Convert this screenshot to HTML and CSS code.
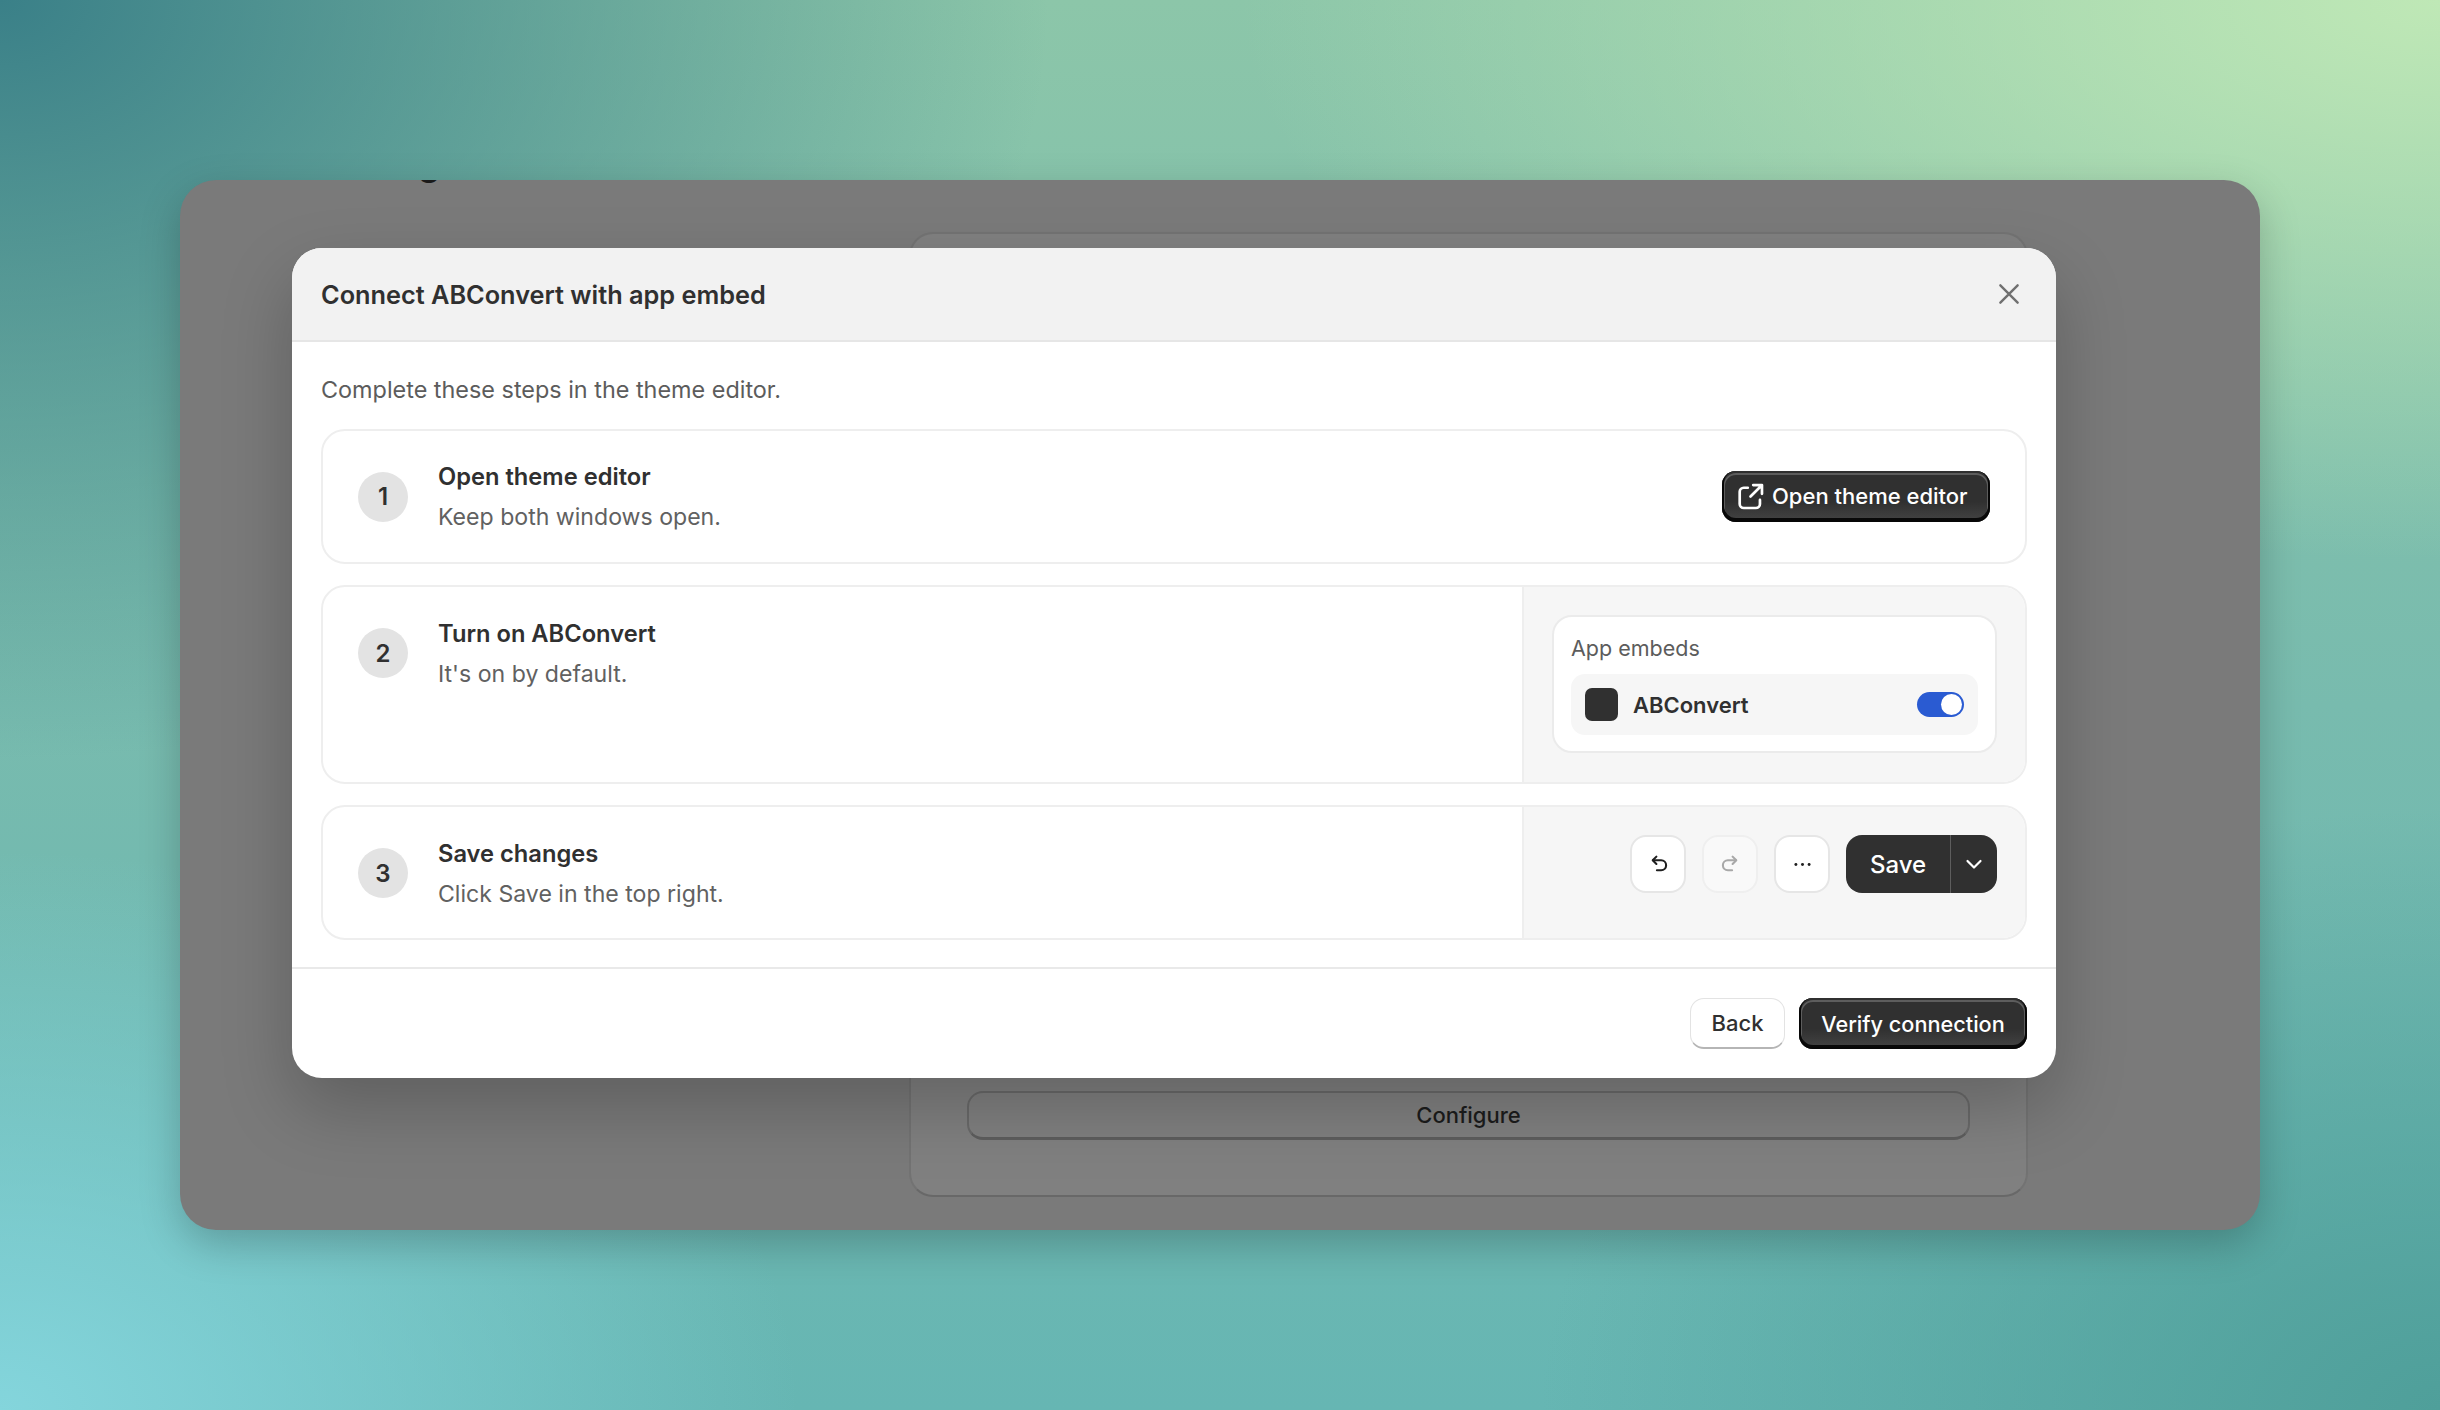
FILE: index.html
```html
<!DOCTYPE html>
<html lang="en">
<head>
    <meta charset="UTF-8">
    <title>Connect ABConvert with app embed</title>
    <link rel="stylesheet" href="styles.css">
</head>
<body>

<div class="window">
    <span class="cut-title">g</span>

    <div class="back-card">
        <div class="back-button">Configure</div>
    </div>

    <div class="modal">
        <div class="modal-header">
            <h2>Connect ABConvert with app embed</h2>
            <svg class="close" viewBox="0 0 20 20" fill="none" stroke="#707070" stroke-width="2" stroke-linecap="round">
                <path d="M2.8 2.8l14.4 14.4M17.2 2.8L2.8 17.2"/>
            </svg>
        </div>

        <div class="modal-body">
            <p class="intro">Complete these steps in the theme editor.</p>

            <div class="step step-one">
                <div class="step-main">
                    <span class="num">1</span>
                    <div class="step-text">
                        <h3>Open theme editor</h3>
                        <p>Keep both windows open.</p>
                    </div>
                </div>
                <a class="btn-dark btn-editor">
                    <svg viewBox="0 0 20 20" fill="none" stroke="#fff" stroke-width="2" stroke-linecap="round" stroke-linejoin="round">
                        <path d="M8 3.500H5a3 3 0 0 0-3 3v9a3 3 0 0 0 3 3h9a3 3 0 0 0 3-3v-3"/>
                        <path d="M12 1.500h6.500V8M18.200 1.800L10 10"/>
                    </svg>
                    Open theme editor
                </a>
            </div>

            <div class="step step-two">
                <div class="step-main">
                    <span class="num">2</span>
                    <div class="step-text">
                        <h3>Turn on ABConvert</h3>
                        <p>It's on by default.</p>
                    </div>
                </div>
                <div class="step-side">
                    <div class="embeds">
                        <div class="embeds-label">App embeds</div>
                        <div class="embed-row">
                            <span class="app-icon"></span>
                            <span class="app-name">ABConvert</span>
                            <span class="toggle"><i></i></span>
                        </div>
                    </div>
                </div>
            </div>

            <div class="step step-three">
                <div class="step-main">
                    <span class="num">3</span>
                    <div class="step-text">
                        <h3>Save changes</h3>
                        <p>Click Save in the top right.</p>
                    </div>
                </div>
                <div class="step-side toolbar">
                    <span class="tool">
                        <svg viewBox="0 0 20 20" fill="none" stroke="#1f1f1f" stroke-width="2" stroke-linecap="round" stroke-linejoin="round">
                            <path d="M8 2.500L4.500 6 8 9.500"/>
                            <path d="M5 6h7.500a4.700 4.700 0 0 1 0 9.500H8.500"/>
                        </svg>
                    </span>
                    <span class="tool tool-off">
                        <svg viewBox="0 0 20 20" fill="none" stroke="#a8a8a8" stroke-width="2" stroke-linecap="round" stroke-linejoin="round">
                            <path d="M12 2.500L15.500 6 12 9.500"/>
                            <path d="M15 6H7.500a4.700 4.700 0 0 0 0 9.500h4"/>
                        </svg>
                    </span>
                    <span class="tool">
                        <svg viewBox="0 0 20 20" fill="#1f1f1f">
                            <circle cx="3.700" cy="10" r="1.400"/>
                            <circle cx="10" cy="10" r="1.400"/>
                            <circle cx="16.300" cy="10" r="1.400"/>
                        </svg>
                    </span>
                    <div class="save-group">
                        <span class="save">Save</span>
                        <span class="save-arrow">
                            <svg viewBox="0 0 20 20" fill="none" stroke="#fff" stroke-width="2.200" stroke-linecap="round" stroke-linejoin="round">
                                <path d="M3.500 7l6.500 6.500L16.500 7"/>
                            </svg>
                        </span>
                    </div>
                </div>
            </div>
        </div>

        <div class="modal-footer">
            <a class="btn-light">Back</a>
            <a class="btn-dark btn-verify">Verify connection</a>
        </div>
    </div>
</div>

</body>
</html>
```

FILE: styles.css
```css
* {
    margin: 0;
    padding: 0;
    box-sizing: border-box;
    font-family: 'Inter', 'Liberation Sans', sans-serif;
}

body {
    width: 2440px;
    height: 1410px;
    overflow: hidden;
    padding: 180px;
    background:
        radial-gradient(ellipse 800px 560px at 0% 100%, #84d5dc 0%, rgba(132, 213, 220, 0) 100%),
        radial-gradient(ellipse 1050px 760px at 0% 0%, #3a8088 0%, rgba(58, 128, 136, 0) 100%),
        radial-gradient(ellipse 1200px 560px at 100% 0%, #bfe8b6 0%, rgba(191, 232, 182, 0) 100%),
        radial-gradient(ellipse 900px 600px at 100% 100%, #4f9f9a 0%, rgba(79, 159, 154, 0) 100%),
        linear-gradient(180deg, #8cc6a9 0%, #78bbae 50%, #66b6b3 100%);
}

/* Dimmed app window behind the modal */
.window {
    position: relative;
    height: 1050px;
    border-radius: 36px;
    background: #7a7a7a;
    box-shadow: 0 14px 40px rgba(0, 0, 0, 0.22);
    overflow: hidden;
    display: flex;
    justify-content: flex-end;
    padding: 52px 232px 33px 0;
}

.cut-title {
    position: absolute;
    left: 238px;
    top: -36px;
    font-size: 36px;
    line-height: 36px;
    font-weight: 600;
    color: #1a1a1a;
}

.back-card {
    width: 1119px;
    background: #808080;
    border: 2px solid #737373;
    border-bottom-color: #686868;
    border-radius: 24px;
    padding: 857px 56px 0;
}

.back-button {
    height: 49px;
    border: 2px solid #6a6a6a;
    border-bottom: 3px solid #5e5e5e;
    border-radius: 16px;
    color: #1c1c1c;
    font-size: 22px;
    font-weight: 500;
    display: flex;
    align-items: center;
    justify-content: center;
}

.modal {
    position: absolute;
    left: 112px;
    top: 68px;
    width: 1764px;
    height: 830px;
    background: #fff;
    border-radius: 30px;
    overflow: hidden;
    box-shadow: 0 30px 70px rgba(0, 0, 0, 0.22);
}

.modal-header {
    height: 94px;
    background: #f2f2f2;
    border-bottom: 2px solid #e6e6e6;
    display: flex;
    align-items: center;
    justify-content: space-between;
    padding: 0 35px 0 29px;
}

.modal-header h2 {
    font-size: 25.3px;
    font-weight: 600;
    color: #303030;
}

.close {
    width: 24px;
    height: 24px;
}

.modal-body {
    padding: 0 29px;
    height: 627px;
    border-bottom: 2px solid #e9e9e9;
}

.intro {
    height: 87px;
    padding-top: 33px;
    font-size: 23.4px;
    color: #5c5c5c;
}

.step {
    display: flex;
    border: 2px solid #eeeeee;
    border-radius: 24px;
    overflow: hidden;
    margin-bottom: 21px;
}

.step-one {
    height: 135px;
    align-items: center;
    justify-content: space-between;
    padding-right: 35px;
}

.step-two {
    height: 199px;
}

.step-three {
    height: 135px;
}

.step-main {
    flex: 1;
    display: flex;
    align-items: flex-start;
    padding: 29px 0 0 35px;
}

.step-one .step-main {
    padding-top: 0;
}

.num {
    width: 50px;
    height: 50px;
    margin-top: 12px;
    border-radius: 50%;
    background: #e3e3e3;
    color: #303030;
    font-size: 24px;
    font-weight: 600;
    display: flex;
    align-items: center;
    justify-content: center;
    flex-shrink: 0;
}

.step-one .num {
    margin-top: 13px;
}

.step-text {
    margin-left: 30px;
}

.step-text h3 {
    font-size: 23.7px;
    line-height: 36px;
    font-weight: 600;
    color: #303030;
}

.step-text p {
    font-size: 23.1px;
    line-height: 36px;
    margin-top: 4px;
    color: #616161;
}

.step-side {
    width: 503px;
    background: #f6f6f6;
    border-left: 2px solid #eeeeee;
    padding: 28px 28px 0;
}

.embeds {
    height: 138px;
    background: #fff;
    border: 2px solid #ebebeb;
    border-radius: 20px;
    padding: 17px 17px 0;
}

.embeds-label {
    font-size: 21.5px;
    line-height: 28px;
    color: #5c5c5c;
    margin-bottom: 12px;
}

.embed-row {
    height: 61px;
    background: #f6f6f6;
    border-radius: 14px;
    display: flex;
    align-items: center;
    padding: 0 14px;
}

.app-icon {
    width: 33px;
    height: 33px;
    border-radius: 7px;
    background: #303030;
}

.app-name {
    flex: 1;
    margin-left: 15px;
    font-size: 22px;
    font-weight: 600;
    color: #303030;
}

.toggle {
    width: 47px;
    height: 25px;
    border-radius: 13px;
    background: #2a5bd2;
    display: flex;
    justify-content: flex-end;
    padding: 2px;
}

.toggle i {
    width: 21px;
    height: 21px;
    border-radius: 50%;
    background: #fff;
}

.toolbar {
    display: flex;
    justify-content: flex-end;
    align-items: flex-start;
    gap: 16px;
}

.tool {
    width: 56px;
    height: 58px;
    background: #fff;
    border: 2px solid #e6e6e6;
    border-radius: 16px;
    display: flex;
    align-items: center;
    justify-content: center;
}

.tool svg {
    width: 21px;
    height: 21px;
}

.tool-off {
    background: #f9f9f9;
    border-color: #efefef;
}

.save-group {
    width: 151px;
    height: 58px;
    border-radius: 16px;
    background: #303030;
    color: #fff;
    display: flex;
    overflow: hidden;
}

.save {
    width: 105px;
    font-size: 24px;
    font-weight: 500;
    display: flex;
    align-items: center;
    justify-content: center;
    border-right: 1px solid #5d5d5d;
}

.save-arrow {
    flex: 1;
    display: flex;
    align-items: center;
    justify-content: center;
}

.save-arrow svg {
    width: 20px;
    height: 20px;
}

.btn-dark {
    height: 51px;
    border-radius: 14px;
    color: #fff;
    font-size: 22px;
    font-weight: 500;
    background: linear-gradient(180deg, #303030 60%, #444 100%);
    box-shadow: inset 0 -2px 0 2px rgba(0, 0, 0, 0.85), inset 0 0 0 2px #303030, inset 0 1px 0 3px rgba(255, 255, 255, 0.22);
    display: flex;
    align-items: center;
    justify-content: center;
}

.btn-editor {
    width: 268px;
    margin-top: -1px;
    gap: 8px;
    justify-content: flex-start;
    padding-left: 15px;
}

.btn-editor svg {
    width: 27px;
    height: 27px;
}

.btn-verify {
    width: 228px;
    font-size: 21.7px;
}

.modal-footer {
    height: 107px;
    display: flex;
    justify-content: flex-end;
    gap: 14px;
    padding: 29px 29px 0 0;
}

.btn-light {
    width: 95px;
    height: 51px;
    border-radius: 14px;
    background: #fff;
    color: #303030;
    font-size: 22px;
    font-weight: 500;
    border: 1px solid #e3e3e3;
    border-bottom: 2px solid #b5b5b5;
    display: flex;
    align-items: center;
    justify-content: center;
}
```
